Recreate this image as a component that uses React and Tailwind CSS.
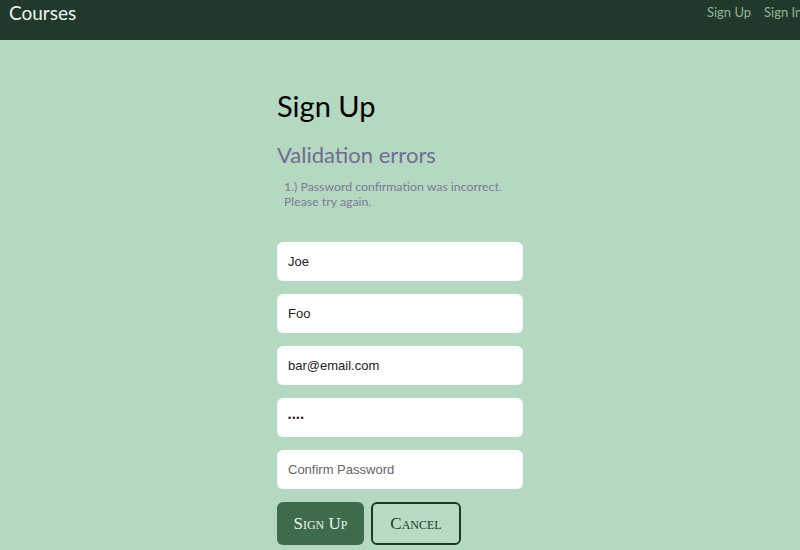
import React, { useState } from 'react';

const HEAD = { fontFamily: '"Lato", "Open Sans", sans-serif' };
const SERIF = { fontFamily: '"Liberation Serif", serif', fontVariant: 'small-caps' };
const INPUT = { fontFamily: '"Liberation Sans", Arial, sans-serif' };

export default function App() {
  const [form, setForm] = useState({
    firstName: 'Joe',
    lastName: 'Foo',
    email: 'bar@email.com',
    password: 'abcd',
    confirmPassword: ''
  });

  const handleChange = (field, value) =>
    setForm(prev => ({ ...prev, [field]: value }));

  return (
    <div className="min-h-screen bg-[#b5d8c0]" style={HEAD}>
      <header className="h-10 bg-[#21392a] flex items-start justify-between overflow-hidden">
        <h1 className="pl-[9px] pt-0 text-[19px] leading-[26px] text-[#eef5ef]">Courses</h1>
        <nav className="flex gap-[13px] pt-[3px] text-[13px] leading-[18px] text-[#93b39b] whitespace-nowrap w-[93px] shrink-0">
          <a href="#">Sign Up</a>
          <a href="#">Sign In</a>
        </nav>
      </header>

      <div className="w-[246px] mx-auto pt-[48px]">
        <h2 className="text-[29px] leading-[36px] text-black">Sign Up</h2>

        <h3 className="mt-[17px] text-[22px] leading-[28px] text-[#6f6d92]">Validation errors</h3>
        <ul className="mt-[10px] pl-[7px] text-[12.3px] leading-[15px] text-[#7c7a99]">
          <li>1.) Password confirmation was incorrect. Please try again.</li>
        </ul>

        <form className="mt-[33px] flex flex-col gap-[13px]" onSubmit={e => e.preventDefault()}>
          <input
            type="text"
            placeholder="First Name"
            value={form.firstName}
            onChange={e => handleChange('firstName', e.target.value)}
            className="h-[39px] bg-white rounded-[6px] px-[11px] text-[13px] text-[#222] placeholder-[#666] outline-none"
            style={INPUT}
          />
          <input
            type="text"
            placeholder="Last Name"
            value={form.lastName}
            onChange={e => handleChange('lastName', e.target.value)}
            className="h-[39px] bg-white rounded-[6px] px-[11px] text-[13px] text-[#222] placeholder-[#666] outline-none"
            style={INPUT}
          />
          <input
            type="email"
            placeholder="Email Address"
            value={form.email}
            onChange={e => handleChange('email', e.target.value)}
            className="h-[39px] bg-white rounded-[6px] px-[11px] text-[13px] text-[#222] placeholder-[#666] outline-none"
            style={INPUT}
          />
          <input
            type="password"
            placeholder="Password"
            value={form.password}
            onChange={e => handleChange('password', e.target.value)}
            className="h-[39px] bg-white rounded-[6px] px-[11px] text-[9px] tracking-[1px] text-[#222] placeholder-[#666] outline-none"
            style={INPUT}
          />
          <input
            type="password"
            placeholder="Confirm Password"
            value={form.confirmPassword}
            onChange={e => handleChange('confirmPassword', e.target.value)}
            className="h-[39px] bg-white rounded-[6px] px-[11px] text-[13px] text-[#222] placeholder-[#666] outline-none"
            style={INPUT}
          />

          <div className="flex gap-[7px]">
            <button
              type="submit"
              className="w-[87px] h-[43px] rounded-[6px] bg-[#3e6b4c] text-[#eef5ef] text-[17px]"
              style={SERIF}
            >
              Sign Up
            </button>
            <button
              type="button"
              className="w-[90px] h-[43px] rounded-[6px] border-2 border-[#1e3826] bg-[#b9dbc3] text-[#1e3826] text-[17px]"
              style={SERIF}
            >
              Cancel
            </button>
          </div>
        </form>
      </div>
    </div>
  );
}
